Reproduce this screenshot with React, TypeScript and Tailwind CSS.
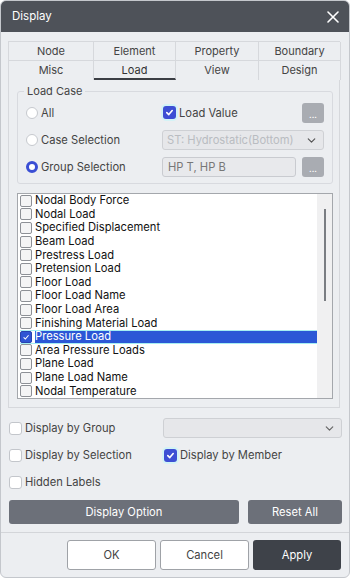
import { ChevronDown } from "lucide-react"

const listItems = [
  "Nodal Body Force",
  "Nodal Load",
  "Specified Displacement",
  "Beam Load",
  "Prestress Load",
  "Pretension Load",
  "Floor Load",
  "Floor Load Name",
  "Floor Load Area",
  "Finishing Material Load",
  "Pressure Load",
  "Area Pressure Loads",
  "Plane Load",
  "Plane Load Name",
  "Nodal Temperature",
]

const tabsTop = ["Node", "Element", "Property", "Boundary"]
const tabsBottom = ["Misc", "Load", "View", "Design"]

function Check({ on = false }: { on?: boolean }) {
  if (on) {
    return (
      <span className="flex h-[13px] w-[13px] shrink-0 items-center justify-center rounded-[3px] bg-[#3d4fd4] shadow-[0_0_0_2px_#d3f3f6]">
        <svg width="9" height="9" viewBox="0 0 10 10">
          <path d="M2 5.2 L4.2 7.3 L8 2.8" fill="none" stroke="white" strokeWidth="1.8" strokeLinecap="round" strokeLinejoin="round" />
        </svg>
      </span>
    )
  }
  return <span className="h-[13px] w-[13px] shrink-0 rounded-[3px] border border-[#c3c6cb] bg-white" />
}

function Radio({ on = false }: { on?: boolean }) {
  return on ? (
    <span className="h-[12px] w-[12px] shrink-0 rounded-full border-[3px] border-[#3a4ed4] bg-white" />
  ) : (
    <span className="h-[12px] w-[12px] shrink-0 rounded-full border border-[#c6c9ce] bg-white" />
  )
}

function DotsButton() {
  return (
    <button className="flex h-[20px] w-[22px] items-end justify-center rounded-[3px] bg-[#a9acb2] pb-[4px] text-[9px] leading-none text-white">
      ...
    </button>
  )
}

function ListBox({ checked }: { checked: boolean }) {
  return (
    <span
      className={
        checked
          ? "flex h-[12px] w-[12px] shrink-0 items-center justify-center rounded-[2px] border border-[#2741b0] bg-[#2f55d4]"
          : "h-[12px] w-[12px] shrink-0 rounded-[2px] border border-[#8d9096] bg-[#f4f4f5]"
      }
    >
      {checked && (
        <svg width="8" height="8" viewBox="0 0 10 10">
          <path d="M2 5.5 L4.2 7.5 L8.2 2.8" fill="none" stroke="white" strokeWidth="1.3" />
        </svg>
      )}
    </span>
  )
}

export default function App() {
  return (
    <div
      className="h-[579px] w-[350px] bg-white text-[11.2px] text-[#444]"
      style={{ fontFamily: "Inter, 'Noto Sans', sans-serif" }}
    >
      <div className="flex h-[578px] flex-col overflow-hidden rounded-[6px] border border-[#c4c7cc] bg-[#eceef1]">
        {/* title bar */}
        <div className="flex h-[31px] shrink-0 items-center justify-between bg-[#4e5259] pl-[11px] pr-[10px]">
          <span className="text-[11.5px] text-white">Display</span>
          <svg width="12" height="12" viewBox="0 0 12 12">
            <path d="M1 1 L11 11 M11 1 L1 11" stroke="white" strokeWidth="1.6" strokeLinecap="round" />
          </svg>
        </div>

        <div className="flex flex-col px-[7px] pt-[9px]">
          {/* tabs */}
          <div className="grid w-[332px] grid-cols-[85px_82px_83px_82px] border-l border-t border-[#d6d8dc]">
            {tabsTop.map((t) => (
              <div key={t} className="flex h-[19px] items-center justify-center border-b border-r border-[#d6d8dc] text-[11px] text-[#444]">
                {t}
              </div>
            ))}
            {tabsBottom.map((t) => (
              <div
                key={t}
                className={
                  t === "Load"
                    ? "flex h-[19px] items-center justify-center border-r border-b-2 border-r-[#d6d8dc] border-b-[#3b3e44] pt-[2px] text-[11px] text-[#333]"
                    : "flex h-[19px] items-center justify-center border-r border-[#d6d8dc] text-[11px] text-[#444]"
                }
              >
                {t}
              </div>
            ))}
          </div>

          {/* tab panel */}
          <div className="flex h-[328px] w-[332px] flex-col border border-t-0 border-[#d6d8dc] pl-[8px] pt-[11px]">
            {/* Load Case group */}
            <div className="relative h-[93px] w-[316px] rounded-[3px] border border-[#d8dadf] pl-[8px] pr-[8px] pt-[11px]">
              <span className="absolute -top-[8px] left-[6px] bg-[#eceef1] px-[3px] text-[11px] leading-[14px] text-[#444]">
                Load Case
              </span>
              <div className="grid grid-cols-[136px_162px] gap-y-[7px]">
                <div className="flex h-[20px] items-center gap-[3px]">
                  <Radio />
                  <span>All</span>
                </div>
                <div className="flex h-[20px] items-center justify-between">
                  <div className="flex items-center gap-[3px] pl-[1px]">
                    <Check on />
                    <span>Load Value</span>
                  </div>
                  <DotsButton />
                </div>

                <div className="flex h-[20px] items-center gap-[3px]">
                  <Radio />
                  <span>Case Selection</span>
                </div>
                <div className="flex h-[20px] items-center justify-between rounded-[3px] border border-[#ced0d4] bg-[#e6e7ea] pl-[4px] pr-[5px]">
                  <span className="text-[#b9bcc1]">ST: Hydrostatic(Bottom)</span>
                  <ChevronDown size={13} strokeWidth={2.2} className="text-[#555]" />
                </div>

                <div className="flex h-[20px] items-center gap-[3px]">
                  <Radio on />
                  <span>Group Selection</span>
                </div>
                <div className="flex h-[20px] items-center justify-between">
                  <div className="flex h-[20px] w-[134px] items-center rounded-[3px] border border-[#c9cbd0] bg-[#e8e9ec] pl-[5px] text-[#777]">
                    HP T, HP B
                  </div>
                  <DotsButton />
                </div>
              </div>
            </div>

            {/* list */}
            <div className="mt-[9px] flex h-[206px] w-[316px] border border-[#a4a7ac] bg-white">
              <div className="flex flex-1 flex-col pl-[2px]">
                {listItems.map((item) => {
                  const sel = item === "Pressure Load"
                  return (
                    <div
                      key={item}
                      className={
                        sel
                          ? "flex h-[13.6px] items-center gap-[3px] border-y border-[#a6eef2] text-[11.2px] leading-none"
                          : "flex h-[13.6px] items-center gap-[3px] text-[11.2px] leading-none text-[#111]"
                      }
                    >
                      <ListBox checked={sel} />
                      <span className={sel ? "flex h-full flex-1 items-center bg-[#2b57d6] text-white" : ""}>{item}</span>
                    </div>
                  )
                })}
              </div>
              <div className="flex w-[15px] justify-center bg-[#f0f0f1] pt-[15px]">
                <div className="h-[92px] w-[2px] bg-[#7a7d82]" />
              </div>
            </div>
          </div>

          {/* options */}
          <div className="mt-[10px] grid grid-cols-[154px_179px] gap-y-[7px] pl-[1px]">
            <div className="flex h-[20px] items-center gap-[3px]">
              <Check />
              <span>Display by Group</span>
            </div>
            <div className="flex h-[20px] items-center justify-end rounded-[3px] border border-[#ced0d4] bg-[#e6e7ea] pr-[5px]">
              <ChevronDown size={13} strokeWidth={2.2} className="text-[#666]" />
            </div>

            <div className="flex h-[20px] items-center gap-[3px]">
              <Check />
              <span>Display by Selection</span>
            </div>
            <div className="flex h-[20px] items-center gap-[3px] pl-[1px]">
              <Check on />
              <span>Display by Member</span>
            </div>

            <div className="flex h-[20px] items-center gap-[3px]">
              <Check />
              <span>Hidden Labels</span>
            </div>
          </div>

          {/* action buttons */}
          <div className="mt-[8px] flex gap-[9px] pl-[1px]">
            <button className="h-[24px] w-[230px] rounded-[3px] bg-[#6c7079] text-[11.2px] text-white">Display Option</button>
            <button className="h-[24px] w-[94px] rounded-[3px] bg-[#6c7079] text-[11.2px] text-white">Reset All</button>
          </div>
        </div>

        <div className="mt-[8px] h-px bg-[#d3d5d9]" />

        <div className="flex justify-end gap-[4px] pr-[8px] pt-[7px]">
          <button className="h-[30px] w-[89px] rounded-[3px] border border-[#9fa2a7] bg-white text-[11.2px] text-[#444]">OK</button>
          <button className="h-[30px] w-[89px] rounded-[3px] border border-[#9fa2a7] bg-white text-[11.2px] text-[#444]">Cancel</button>
          <button className="h-[30px] w-[88px] rounded-[3px] bg-[#3e4249] text-[11.2px] text-white">Apply</button>
        </div>
      </div>
    </div>
  )
}
